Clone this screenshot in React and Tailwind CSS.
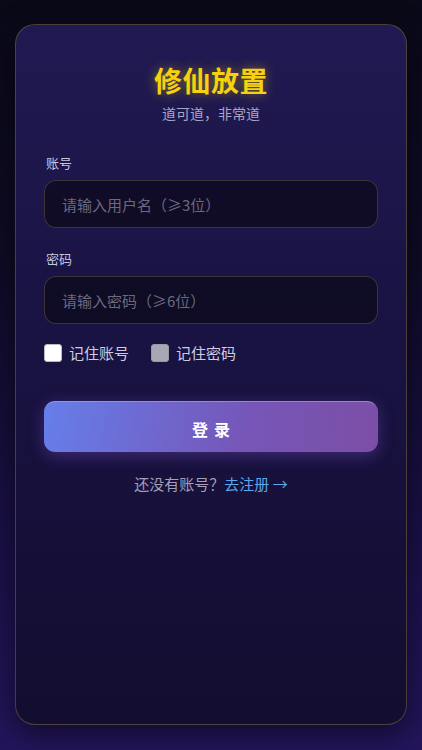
import React, { useState } from "react";

const FONT = { fontFamily: '"Noto Sans CJK SC", "Noto Sans", sans-serif' };

function Field({ label, placeholder, type = "text", value, onChange }) {
  return (
    <div className="flex flex-col">
      <label className="mb-[7px] pl-[2px] text-[13px] leading-5 text-[#c9c6dc]">{label}</label>
      <input
        type={type}
        value={value}
        onChange={(e) => onChange(e.target.value)}
        placeholder={placeholder}
        className="h-[48px] w-full rounded-[12px] border border-[#4a3f3a]/80 bg-[#0c0918]/70 px-[17px] text-[15px] text-white outline-none placeholder:text-[#6c6880]"
      />
    </div>
  );
}

export default function App() {
  const [username, setUsername] = useState("");
  const [password, setPassword] = useState("");
  const [rememberUser, setRememberUser] = useState(false);

  return (
    <div
      style={FONT}
      className="flex min-h-screen flex-col bg-[linear-gradient(180deg,#0a0918_0%,#0f0b26_35%,#1a1046_70%,#24155c_100%)] px-[15px] pt-[24px] pb-[25px]"
    >
      <div className="flex flex-1 flex-col rounded-[20px] border border-[#5a4a3c]/80 bg-[linear-gradient(180deg,#211a52_0%,#1a1446_35%,#130d30_100%)] px-[28px] pt-[37px] shadow-[0_10px_30px_rgba(0,0,0,0.5)]">
        <div className="flex flex-col items-center">
          <h1 className="text-[28px] font-bold leading-[36px] tracking-[0.5px] text-[#f5d10f] [text-shadow:0_0_12px_rgba(245,209,15,0.45)]">
            修仙放置
          </h1>
          <p className="mt-[5px] text-[14px] leading-5 text-[#a9a6c2]">道可道，非常道</p>
        </div>

        <form className="mt-[30px] flex flex-col gap-[21px]" onSubmit={(e) => e.preventDefault()}>
          <Field label="账号" placeholder="请输入用户名（≥3位）" value={username} onChange={setUsername} />
          <Field
            label="密码"
            type="password"
            placeholder="请输入密码（≥6位）"
            value={password}
            onChange={setPassword}
          />
        </form>

        <div className="mt-[18px] flex items-center gap-[22px] text-[15px] text-[#cfcce0]">
          <label className="flex items-center gap-[7px]">
            <input
              type="checkbox"
              checked={rememberUser}
              onChange={(e) => setRememberUser(e.target.checked)}
              className="h-[18px] w-[18px] appearance-none rounded-[3px] border border-[#bbb] bg-white"
            />
            记住账号
          </label>
          <label className="flex items-center gap-[7px]">
            <input
              type="checkbox"
              disabled
              className="h-[18px] w-[18px] appearance-none rounded-[3px] border border-[#9a98a6] bg-[#a9a7b4]"
            />
            记住密码
          </label>
        </div>

        <button className="mt-[36px] h-[51px] w-full rounded-[11px] border-t border-[#a9a4f0]/60 bg-[linear-gradient(100deg,#667eea_0%,#7656b8_60%,#7c4fa6_100%)] pl-[6px] pt-[5px] text-[16px] font-bold tracking-[6px] text-white shadow-[0_4px_16px_rgba(124,79,200,0.4)]">
          登录
        </button>

        <p className="mt-[21px] text-center text-[15px] text-[#a3a0b8]">
          还没有账号？<a className="text-[#5aa9f0]">去注册 →</a>
        </p>
      </div>
    </div>
  );
}
